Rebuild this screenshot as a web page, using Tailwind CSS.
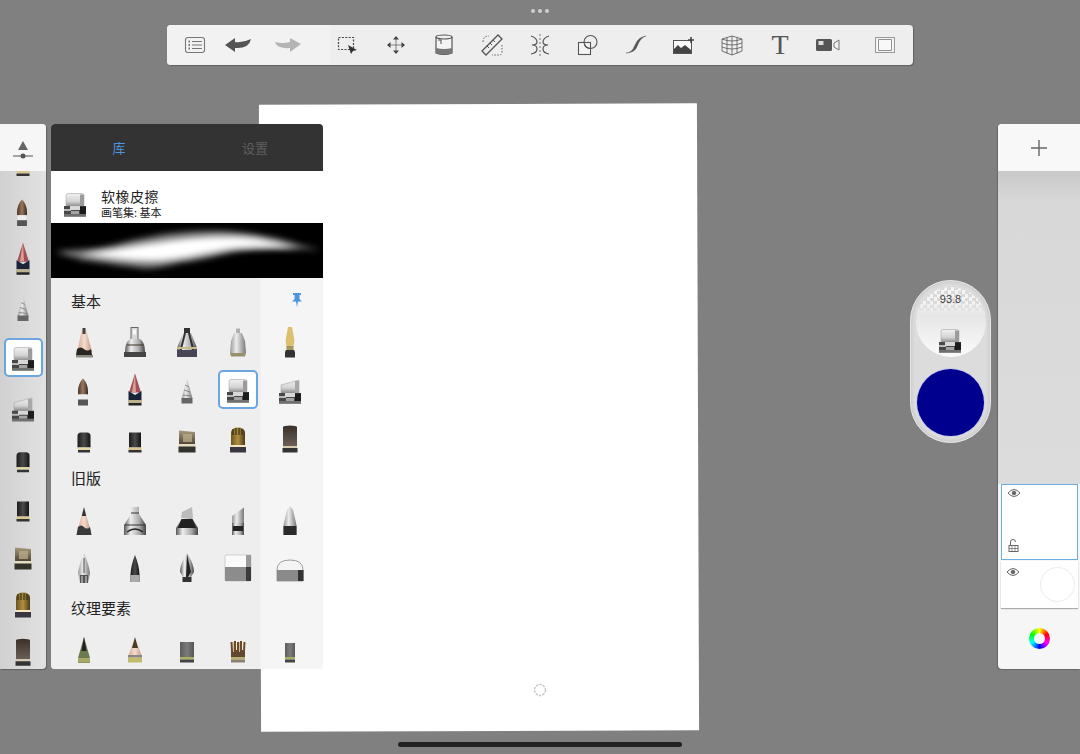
<!DOCTYPE html>
<html lang="zh">
<head>
<meta charset="utf-8">
<script src="https://cdn.jsdelivr.net/npm/@tailwindcss/browser@4"></script>
<title>Sketchbook</title>
</head>
<body class="m-0 bg-[#808080]">
<svg class="absolute w-0 h-0" aria-hidden="true">
<defs>
<linearGradient id="m"><stop offset="0" stop-color="#555"/><stop offset=".3" stop-color="#eee"/><stop offset=".7" stop-color="#aaa"/><stop offset="1" stop-color="#444"/></linearGradient>
<linearGradient id="s"><stop offset="0" stop-color="#999"/><stop offset=".4" stop-color="#ececec"/><stop offset="1" stop-color="#777"/></linearGradient>
<linearGradient id="d"><stop offset="0" stop-color="#1c1c1c"/><stop offset=".5" stop-color="#4a4a4a"/><stop offset="1" stop-color="#141414"/></linearGradient>
<linearGradient id="p"><stop offset="0" stop-color="#d8a890"/><stop offset=".5" stop-color="#f5dccf"/><stop offset="1" stop-color="#c29480"/></linearGradient>
<linearGradient id="b"><stop offset="0" stop-color="#4a3525"/><stop offset=".5" stop-color="#9a7a60"/><stop offset="1" stop-color="#33251a"/></linearGradient>
<linearGradient id="g"><stop offset="0" stop-color="#6b5420"/><stop offset=".5" stop-color="#b09040"/><stop offset="1" stop-color="#4a3a18"/></linearGradient>
<linearGradient id="t" x2="0" y2="1"><stop offset="0" stop-color="#a89a80"/><stop offset="1" stop-color="#4a4030"/></linearGradient>
<linearGradient id="e" x2="0" y2="1"><stop offset="0" stop-color="#f0f0f0"/><stop offset=".6" stop-color="#d4d4d4"/><stop offset="1" stop-color="#8a8a8a"/></linearGradient>
<linearGradient id="h" x2="0" y2="1"><stop offset="0" stop-color="#3a3028"/><stop offset="1" stop-color="#6a6058"/></linearGradient>
<filter id="bl" x="-10%" y="-80%" width="120%" height="260%"><feGaussianBlur stdDeviation="3"/></filter>

<symbol id="er" viewBox="0 0 40 48"><rect x="9" y="26" width="22" height="10.500" fill="#474747"/><rect x="9" y="29" width="7" height="2" fill="#b8b8b8"/><rect x="15" y="26" width="10" height="4" fill="#d8d8d8"/><rect x="16" y="31" width="8" height="3" fill="#a4a4a4"/><rect x="25" y="26.500" width="6" height="7.500" fill="#1c1c1c"/><rect x="9" y="34" width="22" height="2.500" fill="#707070"/></symbol>

<symbol id="b1" viewBox="0 0 40 48"><path d="M18 9h4l6 23H13z" fill="url(#p)"/><rect x="18.500" y="8" width="3" height="6" fill="#444"/><path d="M13 29q3.500-3 7 0t7 0l1 6H12z" fill="#2a2520"/><rect x="12" y="35" width="17" height="2.500" fill="#8a8a80"/></symbol>
<symbol id="b2" viewBox="0 0 40 48"><rect x="16" y="7.500" width="7" height="12" fill="#d8d8d8" stroke="#666"/><rect x="18" y="9.500" width="3" height="5" fill="#f8f8f8"/><path d="M15 19h10q5 3 5 13H10q0-10 5-13z" fill="url(#m)"/><path d="M12 25h16" stroke="#3a3020"/><rect x="9" y="32" width="22" height="5" fill="#444"/></symbol>
<symbol id="b3" viewBox="0 0 40 48"><rect x="17" y="8" width="6" height="8" fill="#333"/><path d="M16 13h8l6 15v5H10v-5z" fill="url(#m)"/><path d="M18 13l-5 20M22 13l5 20" stroke="#333" stroke-width="2"/><rect x="10" y="30" width="20" height="7" fill="#4a4458"/><rect x="10" y="27" width="20" height="2" fill="#c9b98a"/></symbol>
<symbol id="b4" viewBox="0 0 40 48"><rect x="18" y="8.500" width="4" height="5" fill="#b0b0b0"/><path d="M16 13h8l3 8 1 12H12l1-12z" fill="url(#s)"/><path d="M12 33h16l-1 3.500H13z" fill="#96906c"/></symbol>
<symbol id="b5" viewBox="0 0 40 48"><path d="M18 7h4l2.500 14-1.500 8h-6l-1.500-8z" fill="#dcc070"/><rect x="16.500" y="26" width="7" height="4" fill="#a89660"/><path d="M16 30h8l1 2v5.500H15V32z" fill="#333"/></symbol>
<symbol id="b6" viewBox="0 0 40 48"><path d="M19 11.500q5 5 5 13v3H14v-3q0-8 5-13z" fill="url(#b)"/><rect x="14.500" y="27.500" width="9" height="5" fill="#eee"/><path d="M14 32.500h10v6H14z" fill="#555"/></symbol>
<symbol id="b7" viewBox="0 0 40 48"><path d="M20 6.500l6 19H14z" fill="#a0505a"/><path d="M17 25l3-18.500 1 18.500z" fill="#dca090"/><path d="M13.500 24l6.500 4 6.500-4v9h-13z" fill="#1a2438"/><rect x="13" y="33" width="14" height="3" fill="#bbb090"/><rect x="13.500" y="36" width="13" height="2.500" fill="#222"/></symbol>
<symbol id="b8" viewBox="0 0 40 48"><path d="M20 11.500l5.500 20h-11z" fill="url(#s)"/><path d="M18 18l4 2M17 23l6 2M16 28l8 1" stroke="#8a8a8a"/><rect x="14.500" y="31" width="11" height="5.500" fill="#666"/></symbol>
<symbol id="b9" viewBox="0 0 40 48"><rect x="11" y="13.500" width="18" height="13" rx="2" fill="url(#e)" stroke="#999" stroke-width=".5"/><rect x="25" y="14.500" width="4" height="11.500" fill="#9c9c9c"/><use href="#er"/></symbol>
<symbol id="b10" viewBox="0 0 40 48"><path d="M11 18l18-5v13H11z" fill="url(#e)" stroke="#999" stroke-width=".5"/><rect x="25" y="14" width="4" height="12" fill="#a8a8a8"/><use href="#er"/></symbol>
<symbol id="b11" viewBox="0 0 40 48"><path d="M13.500 21q0-3.500 3.500-3.500h6q3.500 0 3.500 3.500v11.500h-13z" fill="url(#d)"/><rect x="13.500" y="32.500" width="13" height="2.500" fill="#e4d8a8"/><rect x="14" y="35" width="12" height="2.500" fill="#333"/></symbol>
<symbol id="b12" viewBox="0 0 40 48"><rect x="14" y="17.500" width="12" height="15" fill="url(#d)"/><rect x="13.500" y="32.500" width="13" height="2.500" fill="#d8c890"/><rect x="13.500" y="35" width="13" height="2.500" fill="#333"/></symbol>
<symbol id="b13" viewBox="0 0 40 48"><path d="M12 15.500l16 1.500v13H12z" fill="url(#t)"/><rect x="16" y="19" width="9" height="8" fill="#c0b090" opacity=".7"/><rect x="11.500" y="29" width="17" height="2.500" fill="#e8dcc0"/><rect x="11.500" y="31.500" width="17" height="6" fill="#33332c"/></symbol>
<symbol id="b14" viewBox="0 0 40 48"><path d="M13 17q1-4.500 7-4.500t7 4.500v13H13z" fill="url(#g)"/><path d="M15 14v6M18 13v7M21 13v7M24 14v6" stroke="#2a2210"/><rect x="12" y="30" width="16" height="2" fill="#f0e6c0"/><rect x="12" y="32" width="16" height="5.500" fill="#3a3540"/></symbol>
<symbol id="b15" viewBox="0 0 40 48"><path d="M13 12q1-1.500 7-1.500t7 1.500v19H13z" fill="url(#h)"/><rect x="13" y="31" width="14" height="2" fill="#d8ccb0"/><rect x="12.500" y="33" width="15" height="4.500" fill="#333"/></symbol>

<symbol id="l1" viewBox="0 0 40 48"><path d="M20 11l7 25v3H13v-3z" fill="url(#p)"/><path d="M20 11l2.200 9h-4.400z" fill="#333"/><path d="M14 31q3-3 6 0t6 0l1.500 8h-15z" fill="#3a3a3a"/></symbol>
<symbol id="l2" viewBox="0 0 40 48"><path d="M16 11h8v7l7 11v10H9V29l7-11z" fill="url(#m)"/><path d="M16 17h8M10 29h20" stroke="#333"/><path d="M12 36q8-6 16 0" fill="none" stroke="#222" stroke-width="1.500"/></symbol>
<symbol id="l3" viewBox="0 0 40 48"><path d="M15 16l10-5 1 11H14z" fill="#bbb"/><path d="M15 22h10l6 10v7H9v-7z" fill="url(#m)"/><path d="M14.500 23h11l4 9h-19z" fill="#222"/></symbol>
<symbol id="l4" viewBox="0 0 40 48"><path d="M14 20l12-8.500V27H14z" fill="url(#s)"/><rect x="14" y="27" width="12" height="12" fill="url(#m)"/><rect x="15" y="30" width="10" height="5" fill="#222"/></symbol>
<symbol id="l5" viewBox="0 0 40 48"><path d="M20 10l3 4 3.500 15v10h-13V29L17 14z" fill="url(#s)"/><rect x="13.500" y="30" width="13" height="9" fill="#2b2b2b"/></symbol>
<symbol id="l6" viewBox="0 0 40 48"><path d="M20 9q5 12 6 20l-2 10h-8l-2-10q1-8 6-20z" fill="url(#s)"/><path d="M20 14v15" stroke="#555"/><path d="M16 31h8v8h-8z" fill="#555"/><path d="M18 32v7M22 32v7" stroke="#ddd"/></symbol>
<symbol id="l7" viewBox="0 0 40 48"><path d="M20 11q4 10 4.500 19v8h-9v-8q.5-9 4.500-19z" fill="url(#d)"/><path d="M15.500 31h9v7h-9z" fill="#aaa"/></symbol>
<symbol id="l8" viewBox="0 0 40 48"><path d="M20 9q7 11 7 19l-3 5h-8l-3-5q0-8 7-19z" fill="url(#m)"/><path d="M20 10l4 18-3 5h-2z" fill="#222"/><rect x="15.500" y="33" width="9" height="5" fill="#333"/></symbol>
<symbol id="l9" viewBox="0 0 40 48"><rect x="7" y="11" width="26" height="26" rx="1" fill="#fafafa" stroke="#aaa" stroke-width=".5"/><rect x="7" y="23" width="22" height="14" fill="#8c8c8c"/><rect x="28" y="11" width="5" height="26" fill="#9a9a9a"/><rect x="28" y="23" width="5" height="14" fill="#3a3a3a"/></symbol>
<symbol id="l10" viewBox="0 0 40 48"><path d="M7 37V26q0-10 13-10t13 10v11z" fill="#f4f4f4" stroke="#888" stroke-width=".8"/><rect x="7" y="26" width="26" height="11" fill="#8a8a8a"/><rect x="28" y="26" width="5.500" height="11" fill="#333"/></symbol>

<symbol id="t1" viewBox="0 0 40 48"><path d="M20 10l6 21v5H14v-5z" fill="#6c7a50"/><path d="M20 10l2.500 14h-5z" fill="#222"/><rect x="14" y="31" width="12" height="4.500" fill="#a8a868"/></symbol>
<symbol id="t2" viewBox="0 0 40 48"><path d="M20 10l7 20v5H13v-5z" fill="url(#p)"/><path d="M20 10l3 11h-6z" fill="#4a3a28"/><rect x="13" y="28" width="14" height="2.500" fill="#888"/><rect x="13" y="30.500" width="14" height="5" fill="#c0bc70"/></symbol>
<symbol id="t3" viewBox="0 0 40 48"><rect x="13" y="15" width="14" height="15" fill="url(#d)" opacity=".7"/><rect x="13" y="30" width="14" height="2.500" fill="#aab060"/><rect x="13" y="32.500" width="14" height="3" fill="#444"/></symbol>
<symbol id="t4" viewBox="0 0 40 48"><rect x="13" y="23" width="14" height="7" fill="#604830"/><path d="M14 24l-.5-9M17 24v-10M20 24V15M23 24v-10M26 24l.5-9" stroke="#6a4a28" stroke-width="2"/><path d="M15.500 25V15M21.500 25V15" stroke="#d8b890"/><rect x="13" y="30" width="14" height="2.500" fill="#b8b070"/><rect x="13" y="32.500" width="14" height="3" fill="#8a8070"/></symbol>
<symbol id="t5" viewBox="0 0 40 48"><rect x="15" y="16" width="10" height="14" fill="url(#d)" opacity=".7"/><rect x="15" y="30" width="10" height="2.500" fill="#a8ae60"/><rect x="15" y="32.500" width="10" height="3" fill="#444"/></symbol>
</defs>
</svg>

<main class="relative w-[1080px] h-[754px] overflow-hidden bg-[#808080] font-['Noto_Sans_CJK_SC','Noto_Sans',sans-serif]">
  <!-- canvas -->
  <div class="absolute left-[260px] top-[104px] w-[438px] h-[627px] bg-white rotate-[-0.2deg]"></div>
  <svg class="absolute left-[533px] top-[683px]" width="14" height="14" viewBox="0 0 14 14" fill="none" stroke="#c8c8c8" stroke-width="1.500" stroke-dasharray="2.500 1"><circle cx="7" cy="7" r="5.500"/></svg>

  <!-- dots -->
  <div class="absolute left-[531px] top-[9px] flex gap-[3px]">
    <span class="w-1 h-1 rounded-full bg-[#cfcfcf]"></span><span class="w-1 h-1 rounded-full bg-[#cfcfcf]"></span><span class="w-1 h-1 rounded-full bg-[#cfcfcf]"></span>
  </div>

  <!-- toolbar -->
  <header class="absolute left-[167px] top-[25px] w-[746px] h-[40px] rounded-[4px] bg-[#eeeeee] flex overflow-hidden shadow-[1px_1px_1px_rgba(0,0,0,.25)]">
    <div class="flex w-[163px] pl-[4px] bg-[#f2f2f2]">
      <div class="w-[48px] flex items-center justify-center"><svg width="22" height="18" viewBox="0 0 22 18" fill="none" stroke="#777" stroke-width="1.100"><rect x="1.500" y="1.500" width="19" height="15" rx="2.500"/><path d="M8 5.500h10M8 9h10M8 12.500h10" /><path d="M4.500 5.500h1.500M4.500 9h1.500M4.500 12.500h1.500" stroke-width="1.800"/></svg></div>
      <div class="w-[38px] flex items-center justify-center"><svg width="26" height="14" viewBox="0 0 26 14"><path d="M0 7l10-7v4q8 1 16-3-2 10-16 9v4z" fill="#555"/></svg></div>
      <div class="w-[62px] flex items-center justify-center"><svg width="26" height="14" viewBox="0 0 26 14"><path d="M26 6L15 0v4Q8 6 0 4q2 7 15 6v4z" fill="#b4b4b4"/></svg></div>
    </div>
    <div class="flex -ml-[6px]">
      <div class="w-[48px] flex items-center justify-center"><svg width="22" height="20" viewBox="0 0 22 20"><rect x="1.500" y="2.500" width="15" height="12" fill="none" stroke="#444" stroke-width="1.200" stroke-dasharray="2 1.400"/><path d="M11 10l9 5-4 1-2 3z" fill="#333"/></svg></div>
      <div class="w-[48px] flex items-center justify-center"><svg width="20" height="20" viewBox="0 0 20 20" fill="#444"><path d="M3 10h14M10 3v14" stroke="#666" stroke-width=".8"/><path d="M10 1l3 3.500H7zM10 19l-3-3.500h6zM1 10l3.500-3v6zM19 10l-3.500 3v-6z"/></svg></div>
      <div class="w-[48px] flex items-center justify-center"><svg width="20" height="24" viewBox="0 0 20 24"><path d="M2 4v16q8 3 16 0V4" fill="#f4f4f4" stroke="#555" stroke-width="1.200"/><ellipse cx="10" cy="4" rx="8" ry="2" fill="#eee" stroke="#555" stroke-width="1.200"/><path d="M2 15q8 2 16 0v5q-8 3-16 0z" fill="#777"/><path d="M4 7h3v4" fill="none" stroke="#555"/></svg></div>
      <div class="w-[48px] flex items-center justify-center"><svg width="24" height="24" viewBox="0 0 24 24" fill="none" stroke="#555"><path d="M2 18L18 2l4 4L6 22z" stroke-width="1.300"/><path d="M7 13l2 2M10 10l2 2M13 7l2 2" stroke-width="1"/><path d="M3 9q0-6 6-6M22 12v7q0 3-3 3h-7" stroke-dasharray="1.500 1.500" stroke-width=".9"/></svg></div>
      <div class="w-[48px] flex items-center justify-center"><svg width="24" height="22" viewBox="0 0 24 22" fill="none" stroke="#555" stroke-width="1.200"><path d="M12 0v22" stroke-dasharray="2 2" stroke="#888"/><path d="M3 2q6 2 6 6 0 3-5 3 5 0 5 4t-6 5M21 2q-6 2-6 6 0 3 5 3-5 0-5 4t6 5"/></svg></div>
      <div class="w-[48px] flex items-center justify-center"><svg width="22" height="22" viewBox="0 0 22 22" fill="none" stroke="#555" stroke-width="1.100"><rect x="1.500" y="8.500" width="12" height="12" fill="#f4f4f4"/><circle cx="13.500" cy="8" r="6.500"/><path d="M13.500 14.500a6.500 6.500 0 0 1-6-4" /></svg></div>
      <div class="w-[48px] flex items-center justify-center"><svg width="22" height="20" viewBox="0 0 22 20" fill="none"><path d="M1 18q6 0 9-8t11-9q-6 2-8.500 9.500T1 18z" fill="#555" stroke="#555" stroke-width=".4"/></svg></div>
      <div class="w-[48px] flex items-center justify-center"><svg width="22" height="20" viewBox="0 0 22 20"><rect x="0.500" y="5.500" width="18" height="13" fill="#fafafa" stroke="#555"/><path d="M1 18v-4l4-4 3 3 4-3 6 5v3z" fill="#444"/><path d="M15 5h6M18 2v6" stroke="#444" stroke-width="1.600"/></svg></div>
      <div class="w-[48px] flex items-center justify-center"><svg width="24" height="22" viewBox="0 0 24 22" fill="none" stroke="#666" stroke-width=".9"><path d="M2 5l10-3 10 3v12l-10 4-10-4z"/><path d="M2 9q10 4 20 0M2 13q10 4 20 0M7 3.500v16M12 2v19M17 3.500v16M2 5q10 4 20 0"/></svg></div>
      <div class="w-[48px] flex items-center justify-center"><span class="font-['Liberation_Serif',serif] text-[28px] leading-none text-[#555]">T</span></div>
      <div class="w-[48px] flex items-center justify-center"><svg width="24" height="14" viewBox="0 0 24 14"><rect x="0" y="1" width="16" height="12" rx="1.500" fill="#555"/><rect x="2.500" y="3" width="5" height="4" fill="#ddd"/><path d="M18 5l5-3v10l-5-3z" fill="none" stroke="#777"/></svg></div>
      <div class="w-[9px]"></div>
      <div class="w-[48px] flex items-center justify-center"><svg width="20" height="16" viewBox="0 0 20 16" fill="#f8f8f8" stroke="#999" stroke-width="1.100"><rect x="0.500" y="0.500" width="19" height="15"/><path d="M3.500 2.500h13v11h-13z" stroke="#777" stroke-width=".8"/></svg></div>
    </div>
  </header>

  <!-- brush strip -->
  <aside class="absolute left-0 top-[124px] w-[46px] h-[545px] rounded-r-[4px] overflow-hidden flex flex-col bg-[linear-gradient(90deg,#d0d0d0,#e2e2e2)] shadow-[1px_1px_1px_rgba(0,0,0,.25)]">
    <div class="relative z-10 h-[47px] shrink-0 bg-[#f6f6f6] flex items-center justify-center">
      <svg width="22" height="24" viewBox="0 0 22 24"><path d="M11 5l5 9H6z" fill="#666"/><path d="M1 20h20" stroke="#555"/><circle cx="11" cy="20" r="2.500" fill="#555"/></svg>
    </div>
    <div class="-mt-[34px] flex flex-col items-center">
      <svg class="h-[51px] w-[40px]"><use href="#b12"/></svg>
      <svg class="h-[47.500px] w-[40px]"><use href="#b6"/></svg>
      <svg class="h-[48.500px] w-[40px]"><use href="#b7"/></svg>
      <svg class="h-[49px] w-[40px]"><use href="#b8"/></svg>
      <div class="h-[49.500px] w-full flex items-center justify-center"><div class="w-[39px] h-[39px] rounded-[5px] border-2 border-[#6ca6df] bg-white flex items-center justify-center"><svg class="h-[48px] w-[40px] shrink-0"><use href="#b9"/></svg></div></div>
      <svg class="h-[51.500px] w-[40px]"><use href="#b10"/></svg>
      <svg class="h-[49.500px] w-[40px]"><use href="#b11"/></svg>
      <svg class="h-[48px] w-[40px]"><use href="#b12"/></svg>
      <svg class="h-[48px] w-[40px]"><use href="#b13"/></svg>
      <svg class="h-[48px] w-[40px]"><use href="#b14"/></svg>
      <svg class="h-[48.500px] w-[40px]"><use href="#b15"/></svg>
    </div>
  </aside>

  <!-- brush library -->
  <section class="absolute left-[51px] top-[124px] w-[272px] h-[545px] rounded-[4px] overflow-hidden flex flex-col bg-[#eeeeee]">
    <div class="h-[47px] shrink-0 bg-[#333333] flex text-[13px]">
      <div class="w-[136px] flex items-center justify-center text-[#4f94dc]">库</div>
      <div class="w-[136px] flex items-center justify-center text-[#5e5e5e]">设置</div>
    </div>
    <div class="h-[52px] shrink-0 bg-white flex items-center">
      <svg class="w-[40px] h-[48px] ml-[4px] mt-[13px] shrink-0"><use href="#b9"/></svg>
      <div class="ml-[6px] mt-[10px] flex flex-col text-[#222]">
        <span class="text-[14px] leading-[20px] tracking-[0.5px]">软橡皮擦</span>
        <span class="text-[11px] leading-[12px]">画笔集: 基本</span>
      </div>
    </div>
    <div class="h-[55px] shrink-0 bg-black">
      <svg width="272" height="55" viewBox="0 0 272 55"><path d="M4 29C20 27 35 27 49 25 70 21 85 16 99 14 120 9 145 8 170 8 195 9 215 13 232 17 245 21 258 24 269 27 255 26 245 25 232 25 215 26 195 27 182 29 165 33 145 38 132 39 115 43 100 46 92 45 75 43 55 40 32 37 22 34 12 31 4 29z" fill="#808080" filter="url(#bl)"/><path d="M30 31C60 28 85 22 110 19 140 14 170 13 190 14 210 15 230 21 250 26 225 24 200 24 180 26 150 31 125 38 100 38 80 38 55 35 30 31z" fill="#fff" filter="url(#bl)"/></svg>
    </div>
    <div class="relative grow bg-[linear-gradient(90deg,#eeeeee_0,#eeeeee_209px,#f5f5f5_210px)]">
      <div class="h-[41.500px] flex items-center pt-[4px] pl-[20px] pr-[21px] justify-between text-[15px] leading-none text-[#222]">
        <h3 class="font-normal">基本</h3>
        <svg class="-mt-[2px]" width="10" height="14" viewBox="0 0 10 14" fill="#4f94dc"><path d="M1 0h8v2H7.500v4L10 8.500H6L5 14 4 8.500H0L2.500 6V2H1z"/></svg>
      </div>
      <div class="grid grid-cols-[repeat(5,51.5px)] auto-rows-[47.500px] pl-[7px] justify-items-center">
        <svg class="w-[40px] h-[48px]"><use href="#b1"/></svg>
        <svg class="w-[40px] h-[48px]"><use href="#b2"/></svg>
        <svg class="w-[40px] h-[48px]"><use href="#b3"/></svg>
        <svg class="w-[40px] h-[48px]"><use href="#b4"/></svg>
        <svg class="w-[40px] h-[48px]"><use href="#b5"/></svg>
        <svg class="w-[40px] h-[48px]"><use href="#b6"/></svg>
        <svg class="w-[40px] h-[48px]"><use href="#b7"/></svg>
        <svg class="w-[40px] h-[48px]"><use href="#b8"/></svg>
        <div class="w-[40px] h-[39px] mt-[3px] rounded-[5px] border-2 border-[#6ca6df] bg-white flex items-center justify-center"><svg class="w-[40px] h-[48px] shrink-0"><use href="#b9"/></svg></div>
        <svg class="w-[40px] h-[48px]"><use href="#b10"/></svg>
        <svg class="w-[40px] h-[48px]"><use href="#b11"/></svg>
        <svg class="w-[40px] h-[48px]"><use href="#b12"/></svg>
        <svg class="w-[40px] h-[48px]"><use href="#b13"/></svg>
        <svg class="w-[40px] h-[48px]"><use href="#b14"/></svg>
        <svg class="w-[40px] h-[48px]"><use href="#b15"/></svg>
      </div>
      <h3 class="h-[34px] flex items-center pb-[4px] pl-[20px] text-[15px] leading-none font-normal text-[#222]">旧版</h3>
      <div class="grid grid-cols-[repeat(5,51.5px)] auto-rows-[48px] pl-[7px] justify-items-center">
        <svg class="w-[40px] h-[48px]"><use href="#l1"/></svg>
        <svg class="w-[40px] h-[48px]"><use href="#l2"/></svg>
        <svg class="w-[40px] h-[48px]"><use href="#l3"/></svg>
        <svg class="w-[40px] h-[48px]"><use href="#l4"/></svg>
        <svg class="w-[40px] h-[48px]"><use href="#l5"/></svg>
        <svg class="w-[40px] h-[48px]"><use href="#l6"/></svg>
        <svg class="w-[40px] h-[48px]"><use href="#l7"/></svg>
        <svg class="w-[40px] h-[48px]"><use href="#l8"/></svg>
        <svg class="w-[40px] h-[48px]"><use href="#l9"/></svg>
        <svg class="w-[40px] h-[48px]"><use href="#l10"/></svg>
      </div>
      <h3 class="h-[35px] flex items-center pb-[4px] pl-[20px] text-[15px] leading-none font-normal text-[#222]">纹理要素</h3>
      <div class="grid grid-cols-[repeat(5,51.5px)] auto-rows-[48px] pl-[7px] justify-items-center">
        <svg class="w-[40px] h-[48px]"><use href="#t1"/></svg>
        <svg class="w-[40px] h-[48px]"><use href="#t2"/></svg>
        <svg class="w-[40px] h-[48px]"><use href="#t3"/></svg>
        <svg class="w-[40px] h-[48px]"><use href="#t4"/></svg>
        <svg class="w-[40px] h-[48px]"><use href="#t5"/></svg>
      </div>
    </div>
  </section>

  <!-- puck -->
  <div class="absolute left-[910px] top-[280px] w-[81px] h-[163px] rounded-full bg-[#dcdcdc] border-[1px] border-[#e8e8e8] flex flex-col items-center pt-[6px] gap-[12px] shadow-[inset_0_0_4px_rgba(0,0,0,.15)]">
    <div class="relative w-[70px] h-[70px] rounded-full overflow-hidden bg-[linear-gradient(180deg,#e8e8e8_0%,#e6e6e6_40%,#fbfbfb_100%)]">
      <div class="absolute inset-x-0 top-0 h-[26px] bg-[repeating-conic-gradient(#d9d9d9_0_25%,#f4f4f4_0_50%)] bg-[length:7px_7px]"></div>
      <div class="absolute inset-x-0 top-[14px] h-[14px] bg-[linear-gradient(180deg,transparent,#e8e8e8)]"></div>
      <div class="relative text-center text-[11px] leading-none pt-[7px] font-['Liberation_Sans',sans-serif] text-[#444]">93.8</div>
    </div>
    <svg class="absolute left-[19px] top-[35px] w-[40px] h-[48px]"><use href="#b9"/></svg>
    <div class="w-[67px] h-[67px] rounded-full bg-[#00008f] shadow-[0_0_0_1px_#c8c8ee]"></div>
  </div>

  <!-- layers -->
  <aside class="absolute left-[998px] top-[124px] w-[82px] h-[545px] rounded-l-[4px] overflow-hidden flex flex-col bg-[#f6f6f6] shadow-[-1px_1px_1px_rgba(0,0,0,.2)]">
    <div class="h-[47px] shrink-0 flex items-center justify-center bg-[#f8f8f8]">
      <svg width="16" height="16" viewBox="0 0 16 16" stroke="#666" stroke-width="1.400"><path d="M8 0v16M0 8h16"/></svg>
    </div>
    <div class="h-[313px] shrink-0 bg-[linear-gradient(180deg,#c8c8c8_0,#d8d8d8_30px,#dcdcdc_100%)]"></div>
    <div class="relative h-[76px] ml-[3px] mr-[2px] shrink-0 bg-white border-[1.500px] border-[#6caee0]">
      <svg class="absolute left-[5px] top-[3px]" width="14" height="10" viewBox="0 0 14 10" fill="none" stroke="#666" stroke-width="1"><path d="M1 5q6-7 12 0-6 7-12 0z"/><circle cx="7" cy="5" r="1.800" fill="#666"/></svg>
      <svg class="absolute left-[6px] top-[53px]" width="11" height="15" viewBox="0 0 11 15" fill="none" stroke="#666" stroke-width="1"><path d="M2.500 7V4a2.500 2.500 0 0 1 5 0"/><rect x="1" y="7.500" width="9" height="6"/><path d="M1 10.500h9M4 7.500v6M7 7.500v6" stroke-width=".7"/></svg>
    </div>
    <div class="relative h-[47px] mt-[1px] ml-[3px] mr-[2px] shrink-0 bg-white overflow-hidden shadow-[0_1px_1px_rgba(0,0,0,.3)]">
      <svg class="absolute left-[5px] top-[6px]" width="14" height="10" viewBox="0 0 14 10" fill="none" stroke="#666" stroke-width="1"><path d="M1 5q6-7 12 0-6 7-12 0z"/><circle cx="7" cy="5" r="1.800" fill="#666"/></svg>
      <div class="absolute left-[39px] top-[6px] w-[35px] h-[35px] rounded-full border border-[#ececec]"></div>
    </div>
    <div class="grow flex items-center justify-center">
      <div class="w-[21px] h-[21px] rounded-full flex items-center justify-center bg-[conic-gradient(#ff0,#f00,#f0f,#00f,#0ff,#0f0,#ff0)]"><div class="w-[11px] h-[11px] rounded-full bg-[#f6f6f6]"></div></div>
    </div>
  </aside>

  <!-- home bar -->
  <div class="absolute left-[398px] top-[742px] w-[284px] h-[5px] rounded-full bg-[#222]"></div>
</main>
</body>
</html>
